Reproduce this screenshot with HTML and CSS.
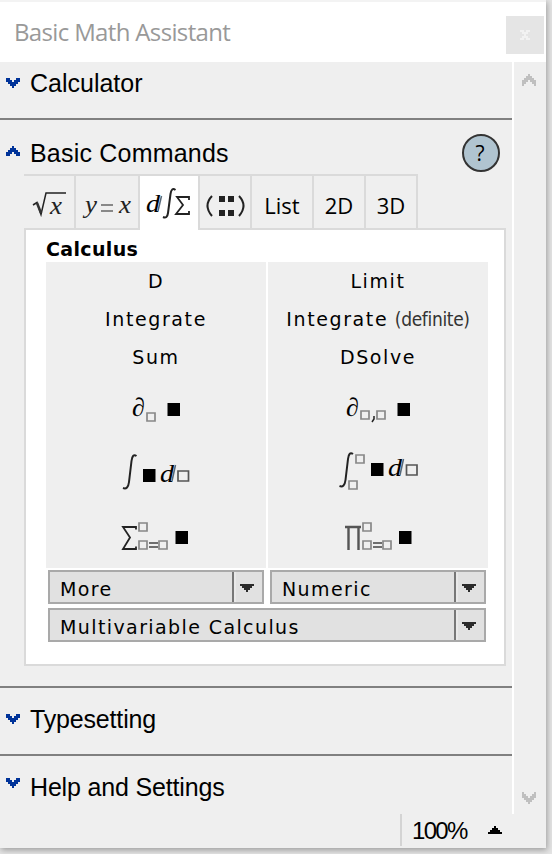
FILE: index.html
```html
<!DOCTYPE html>
<html lang="en">
<head>
<meta charset="utf-8">
<title>Basic Math Assistant</title>
<link rel="stylesheet" href="styles.css">
</head>
<body>
<svg class="defs" width="0" height="0" aria-hidden="true">
  <symbol id="chev-down" viewBox="0 0 14 10"><path d="M0 0h4v2h2v2h2v-2h2v-2h4v4h-2v2h-2v2h-2v2h-2v-2h-2v-2h-2v-2h-2z"/></symbol>
  <symbol id="chev-up" viewBox="0 0 14 10"><path d="M0 10h4v-2h2v-2h2v2h2v2h4v-4h-2v-2h-2v-2h-2v-2h-2v2h-2v2h-2v2h-2z"/></symbol>
  <symbol id="scroll-up" viewBox="0 0 14 12"><path d="M6 0h2v2h2v2h2v2h2v6h-2v-2h-2v-2h-2v-2h-2v2h-2v2h-2v2h-2v-6h2v-2h2v-2h2z"/></symbol>
  <symbol id="scroll-down" viewBox="0 0 14 12"><path d="M6 12h2v-2h2v-2h2v-2h2v-6h-2v2h-2v2h-2v2h-2v-2h-2v-2h-2v-2h-2v6h2v2h2v2h2z"/></symbol>
  <symbol id="drop" viewBox="0 0 14 8"><path d="M0 0h14v2h-2v2h-2v2h-2v2h-2v-2h-2v-2h-2v-2h-2z"/></symbol>
  <symbol id="rise" viewBox="0 0 14 8"><path d="M0 8h14v-2h-2v-2h-2v-2h-2v-2h-2v2h-2v2h-2v2h-2z"/></symbol>
</svg>
<div class="window">
  <header class="titlebar"><h1 class="title">Basic Math Assistant</h1><button class="close"><svg width="10" height="10" viewBox="0 0 10 10"><path d="M0 0h4v2h2v-2h4v2h-2v2h-2v2h2v2h2v2h-4v-2h-2v2h-4v-2h2v-2h2v-2h-2v-2h-2z"/></svg></button></header>
  <div class="body">
    <main class="content">
      <section class="section calculator"><div class="heading"><svg class="chev"><use href="#chev-down"/></svg><h2>Calculator</h2></div></section>
      <section class="section commands">
        <div class="heading"><svg class="chev"><use href="#chev-up"/></svg><h2 class="h-commands">Basic Commands</h2><button class="help">?</button></div>
        <div class="tabs">
          <div class="tab t1"><svg width="50" height="52" viewBox="24 176 50 52"><path class="thin" d="M33 205l4-2.500 4 12 5-21.500h20"/><path class="thick" d="M37 203l4 10"/><text class="var" x="50" y="214" textLength="12" lengthAdjust="spacingAndGlyphs">x</text></svg></div>
          <div class="tab t2"><svg width="62" height="52" viewBox="76 176 62 52"><text class="var" x="85" y="213" textLength="12" lengthAdjust="spacingAndGlyphs">y</text><path class="eq" d="M101 205h12M101 211h12"/><text class="var" x="119" y="213" textLength="12" lengthAdjust="spacingAndGlyphs">x</text></svg></div>
          <div class="tab t3 active"><svg width="58" height="54" viewBox="140 176 58 54"><text class="dd" x="146" y="212" textLength="14" lengthAdjust="spacingAndGlyphs">d</text><path class="stem" d="M161.500 196l-3.500 15"/><path class="integral" d="M175.500 190q-4-3-5 4l-2.500 19q-.8 6-5 4"/><path class="sigma" d="M189 200v-3h-12l6 8-7 9h13v-3"/></svg></div>
          <div class="tab t4"><svg width="50" height="52" viewBox="200 176 50 52"><path class="paren" d="M212 196q-9 9.500 0 20M239 196q9 9.500 0 20"/><path class="dots" d="M219 196h6v6h-6zM228 196h6v6h-6zM219 210h6v6h-6zM228 210h6v6h-6z"/></svg></div>
          <div class="tab t5"><span>List</span></div>
          <div class="tab t6"><span>2D</span></div>
          <div class="tab t7"><span>3D</span></div>
        </div>
        <div class="panel">
          <h3>Calculus</h3>
          <div class="grid">
            <div class="col">
              <button class="cmd">D</button><button class="cmd">Integrate</button><button class="cmd">Sum</button>
              <svg class="math" viewBox="46 376 220 64"><text class="partial" x="132" y="416">∂</text><path class="slot" d="M147 413h8v8h-8z"/><path class="fill" d="M167.500 403h12.500v13h-12.500z"/></svg>
              <svg class="math" viewBox="46 440 220 64"><path class="integral" d="M136.500 456q-4-3-5 5l-2.500 21q-1 8-6 6"/><path class="fill" d="M143 469h12.500v13h-12.500z"/><text class="dd" x="160" y="482" textLength="14" lengthAdjust="spacingAndGlyphs">d</text><path class="stem" d="M175.500 465l-3.500 16"/><path class="slot big" d="M178 471h10.500v10h-10.500z"/></svg>
              <svg class="math" viewBox="46 504 220 64"><path class="sigma" d="M136 529.500v-2.500h-13l7 10.500-7 11.500h13v-2.500"/><path class="slot" d="M139 523h8v8h-8zM139 541h8v8h-8zM159 541h8v8h-8z"/><path class="eq2" d="M149 543h9M149 547h9"/><path class="fill" d="M175.500 531h12.500v13h-12.500z"/></svg>
            </div>
            <div class="col">
              <button class="cmd">Limit</button><button class="cmd">Integrate <small>(definite)</small></button><button class="cmd">DSolve</button>
              <svg class="math" viewBox="268 376 220 64"><text class="partial" x="346" y="416">∂</text><path class="slot" d="M361 411h8v8h-8zM377 411h8v8h-8z"/><path class="comma" d="M374 416v3l-2 3"/><path class="fill" d="M397.500 403h12.500v13h-12.500z"/></svg>
              <svg class="math" viewBox="268 440 220 64"><path class="integral" d="M353 454q-4-3-5 5l-2.500 21q-1 8-6 6"/><path class="slot" d="M356 455h8v8h-8zM349 481h8v8h-8z"/><path class="fill" d="M371 463h12.500v13h-12.500z"/><text class="dd" x="388" y="476" textLength="14" lengthAdjust="spacingAndGlyphs">d</text><path class="stem" d="M403.500 459l-3.500 16"/><path class="slot big" d="M406.500 465h10.500v10h-10.500z"/></svg>
              <svg class="math" viewBox="268 504 220 64"><path class="product" d="M345 527h16M348.500 527v23M358.500 527v23"/><path class="slot" d="M363 523h8v8h-8zM363 541h8v8h-8zM383 541h8v8h-8z"/><path class="eq2" d="M373 543h9M373 547h9"/><path class="fill" d="M399 531h12.500v13h-12.500z"/></svg>
            </div>
          </div>
          <div class="menus">
            <button class="menu"><span>More</span><i><svg><use href="#drop"/></svg></i></button>
            <button class="menu"><span>Numeric</span><i><svg><use href="#drop"/></svg></i></button>
            <button class="menu wide"><span>Multivariable Calculus</span><i><svg><use href="#drop"/></svg></i></button>
          </div>
        </div>
      </section>
      <section class="section typesetting"><div class="heading"><svg class="chev"><use href="#chev-down"/></svg><h2 class="h-type">Typesetting</h2></div></section>
      <section class="section settings"><div class="heading"><svg class="chev"><use href="#chev-down"/></svg><h2 class="h-help">Help and Settings</h2></div></section>
    </main>
    <aside class="scrollbar"><svg><use href="#scroll-up"/></svg><svg><use href="#scroll-down"/></svg></aside>
  </div>
  <footer class="status"><div class="zoom"><span>100%</span><svg><use href="#rise"/></svg></div></footer>
</div>
</body>
</html>
```
FILE: styles.css
```css
* { box-sizing: border-box; }
body { margin: 0; width: 552px; height: 854px; overflow: hidden; background: #e4e4e4; font-family: "Liberation Sans", Arial, sans-serif; color: #000; }
h1, h2, h3 { margin: 0; font-weight: 400; white-space: nowrap; }
button { border: 0; padding: 0; margin: 0; background: none; color: inherit; font: inherit; }
svg { display: block; }
.defs { position: absolute; }
.window { width: 546px; height: 848px; background: #efefef; border-top: 2px solid #f3f3f3; box-shadow: 1px 2px 6px rgba(0,0,0,.32); display: flex; flex-direction: column; }
.titlebar { height: 60px; flex: none; background: #fff; display: flex; justify-content: space-between; padding: 14px 2px 0 14px; }
.title { font: 24px/32px "Open Sans", sans-serif; color: #999; letter-spacing: -.65px; }
.close { width: 38px; height: 38px; background: #e5e5e5; display: grid; place-items: center; }
.close svg { fill: #f2f2f2; shape-rendering: crispEdges; }
.body { display: flex; height: 752px; flex: none; }
.content { width: 512px; }
.section { border-bottom: 2px solid #808080; }
.calculator { height: 58px; padding-top: 4px; }
.commands { height: 568px; padding-top: 14px; }
.typesetting { height: 68px; padding-top: 14px; }
.settings { border: 0; padding-top: 14px; }
.heading { display: flex; align-items: center; height: 34px; padding-left: 6px; }
.commands .heading { height: 38px; }
.heading h2 { font-size: 25px; line-height: 34px; margin-left: 10px; }
.heading .h-commands { letter-spacing: .2px; }
.heading .h-type, .heading .h-help { letter-spacing: -.17px; }
.chev { width: 14px; height: 10px; fill: #003399; shape-rendering: crispEdges; }
.commands .chev { margin-bottom: 4px; }
.settings .chev { margin-bottom: 8px; }
.help { width: 38px; height: 38px; margin-left: auto; margin-right: 12px; border: 2px solid #333; border-radius: 50%; background: #b0c4d0; font: 21px/32px "Open Sans", sans-serif; padding-right: 2px; }
.tabs { display: flex; height: 54px; margin-top: 2px; margin-left: 24px; }
.tab { height: 54px; border-top: 2px solid #dadada; border-right: 2px solid #dadada; font: 22px/58px "Open Sans", sans-serif; text-align: center; }
.tab.active { background: #fff; height: 56px; position: relative; }
.t1 { width: 52px; } .t2 { width: 64px; } .t3 { width: 60px; } .t4 { width: 52px; } .t5 { width: 62px; } .t6, .t7 { width: 52px; }
.thin, .integral, .sigma, .paren, .eq, .eq2, .product, .slot, .comma, .stem { fill: none; stroke: #222; stroke-width: 1.5; }
.stem { stroke: #567; }
.thick { stroke: #333; stroke-width: 2.5; }
.eq { stroke: #888; stroke-width: 2; }
.eq2 { stroke: #444; }
.sigma { stroke-width: 1.8; }
.integral, .paren { stroke-width: 2; }
.product { stroke: #555; stroke-width: 2.4; }
.slot { stroke: #888; stroke-width: 1.7; }
.slot.big { stroke: #555; }
.fill { fill: #000; }
.dots { fill: #222; }
.var { font: italic 25px "Liberation Serif", serif; fill: #222; }
.dd { font: italic 25px "Liberation Serif", serif; }
.partial { font: italic 26px "Liberation Serif", serif; }
.panel { width: 482px; height: 438px; margin-left: 24px; border: 2px solid #dadada; background: #fff; padding-left: 20px; }
.panel h3 { height: 32px; font: bold 19px/38px "DejaVu Sans", Verdana, sans-serif; letter-spacing: .35px; }
.grid { display: flex; gap: 2px; }
.col { width: 220px; height: 306px; background: #efefef; display: flex; flex-direction: column; }
.cmd { height: 38px; font: 19px/38px "DejaVu Sans", Verdana, sans-serif; letter-spacing: 1.6px; white-space: nowrap; }
.cmd small { font: 19px/30px "DejaVu Sans Condensed", sans-serif; letter-spacing: -.35px; margin-left: -1px; color: #333; }
.math { width: 220px; height: 64px; }
.menus { display: grid; grid-template-columns: 216px 216px; gap: 4px 6px; padding: 2px 0 0 2px; }
.menu { height: 34px; border: 2px solid #a9a9a9; background: #e1e1e1; display: flex; justify-content: space-between; padding-left: 10px; font: 19px/34px "DejaVu Sans", Verdana, sans-serif; letter-spacing: 1.4px; }
.wide { grid-column: span 2; }
.menu i { width: 30px; height: 30px; border-left: 2px solid #777; box-shadow: inset 2px 0 #e9e9e9; padding: 12px 0 0 6px; }
.menu svg { width: 14px; height: 8px; fill: #2b2b2b; shape-rendering: crispEdges; }
.scrollbar { width: 34px; border-left: 2px solid #fff; padding: 12px 8px 10px; display: flex; flex-direction: column; justify-content: space-between; }
.scrollbar svg { width: 14px; height: 12px; fill: #bfbfbf; shape-rendering: crispEdges; }
.status { height: 34px; display: flex; justify-content: flex-end; }
.zoom { width: 146px; height: 32px; border-left: 2px solid #d4d4d4; display: flex; padding-left: 10px; font-size: 24px; line-height: 34px; }
.zoom span { width: 76px; letter-spacing: -1.7px; }
.zoom svg { width: 14px; height: 8px; margin-top: 12px; shape-rendering: crispEdges; }
```
